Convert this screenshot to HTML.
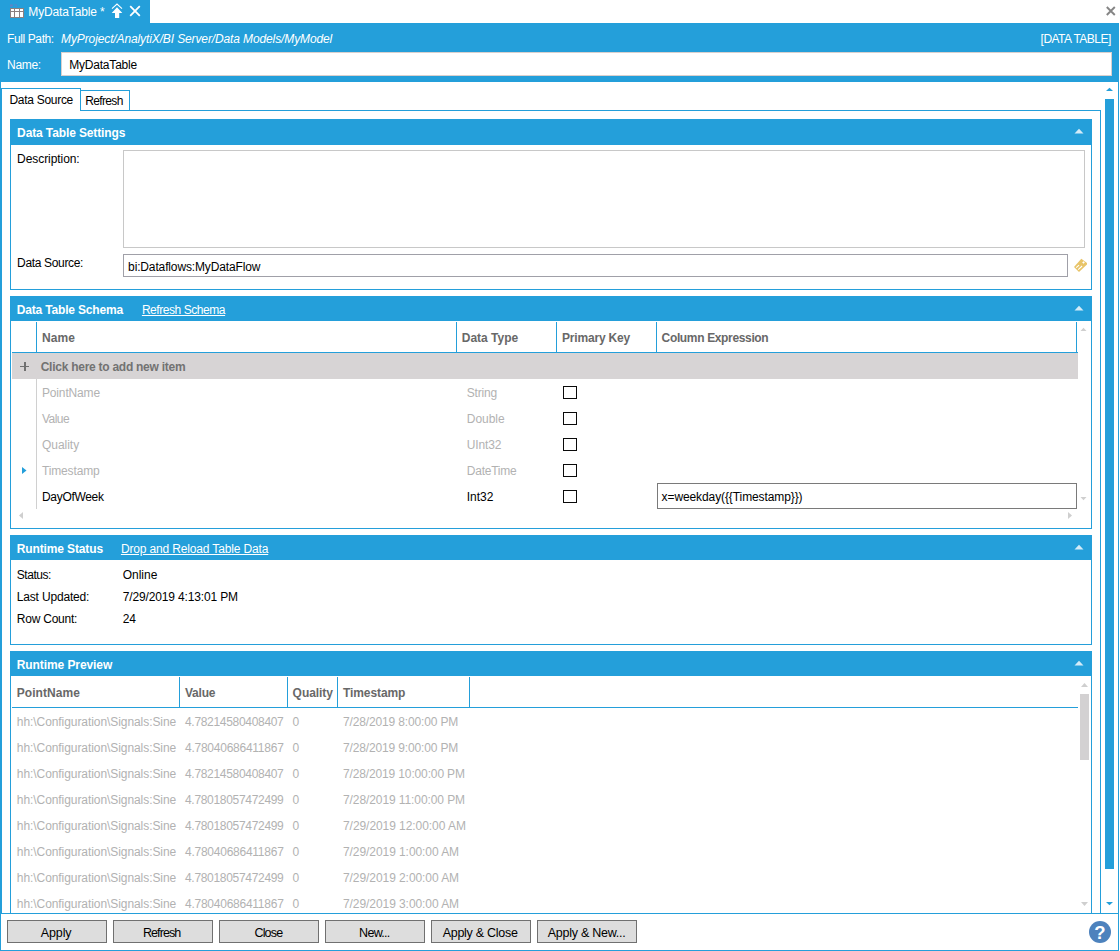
<!DOCTYPE html>
<html><head><meta charset="utf-8"><title>MyDataTable</title>
<style>
*{box-sizing:border-box;margin:0;padding:0}
html,body{width:1120px;height:951px;overflow:hidden;background:#fff}
body{position:relative;font-family:"Liberation Sans",sans-serif;font-size:12px;color:#000}
.a{position:absolute}
.t{position:absolute;white-space:nowrap;line-height:16px;height:16px}
.blue{background:#249fda}
.w{color:#fff}.b{font-weight:bold}.i{font-style:italic}.u{text-decoration:underline}
.g{color:#b2b2b2}
.hd{color:#686868;font-weight:bold}
.hd2{color:#727272;font-weight:bold}
.cb{position:absolute;width:14px;height:13px;border:1px solid #0a0a0a;background:#fff}
.btn{position:absolute;top:920px;width:100px;height:23px;border:1px solid #707070;background:#dddddd;font:inherit;color:inherit;padding:0;margin:0;border-radius:0;text-align:left;overflow:visible}
.tb{position:absolute;background:#fff;border:1px solid #ababab}
.vl{position:absolute;width:1px;background:#249fda}
.hl{position:absolute;height:1px;background:#249fda}
.pn{position:absolute;border:1px solid #249fda;background:#fff}
</style></head><body>
<div class="a blue" style="left:0;top:0;width:150px;height:23px"></div>
<div class="a blue" style="left:0;top:23px;width:1119px;height:59px"></div>
<div class="a blue" style="left:0;top:82px;width:1px;height:869px"></div>
<div class="a blue" style="left:1118px;top:82px;width:1px;height:869px"></div>
<div class="a blue" style="left:0;top:950px;width:1119px;height:1px"></div>
<div class="hl" style="left:1px;top:913px;width:1118px"></div>
<div class="a" style="left:61px;top:52px;width:1051px;height:24px;background:#fff;border:1px solid #d9d0ce"></div>
<div class="a" style="left:1px;top:110px;width:1100px;height:803px;border:1px solid #249fda;border-bottom:none"></div>
<div class="a" style="left:1px;top:88px;width:80px;height:23px;border:1px solid #249fda;border-bottom:none;background:#fff"></div>
<div class="a" style="left:80px;top:90px;width:50px;height:21px;border:1px solid #249fda;background:#fff"></div>
<div class="a blue" style="left:1105px;top:99px;width:9px;height:770px"></div>
<svg class="a" style="left:1105px;top:87px" width="9" height="5"><path d="M1 4L4.5 0.7L8 4Z" fill="#249fda"/></svg>
<svg class="a" style="left:1105px;top:901px" width="9" height="5"><path d="M1 1L4.5 4.3L8 1Z" fill="#249fda"/></svg>
<div class="pn" style="left:10px;top:119px;width:1082px;height:171px"></div>
<div class="a blue" style="left:10px;top:119px;width:1082px;height:26px"></div>
<svg class="a" style="left:1074px;top:128px" width="10" height="6"><path d="M0.5 5.5L5 0.8L9.5 5.5Z" fill="#d3ebf8"/></svg>
<div class="pn" style="left:10px;top:296px;width:1082px;height:233px"></div>
<div class="a blue" style="left:10px;top:296px;width:1082px;height:25px"></div>
<svg class="a" style="left:1074px;top:305px" width="10" height="6"><path d="M0.5 5.5L5 0.8L9.5 5.5Z" fill="#d3ebf8"/></svg>
<div class="pn" style="left:10px;top:535px;width:1082px;height:110px"></div>
<div class="a blue" style="left:10px;top:535px;width:1082px;height:25px"></div>
<svg class="a" style="left:1074px;top:544px" width="10" height="6"><path d="M0.5 5.5L5 0.8L9.5 5.5Z" fill="#d3ebf8"/></svg>
<div class="pn" style="left:10px;top:651px;width:1082px;height:263px"></div>
<div class="a blue" style="left:10px;top:651px;width:1082px;height:25px"></div>
<svg class="a" style="left:1074px;top:660px" width="10" height="6"><path d="M0.5 5.5L5 0.8L9.5 5.5Z" fill="#d3ebf8"/></svg>
<div class="tb" style="left:123px;top:150px;width:962px;height:98px;border-color:#c8c8c8"></div>
<div class="tb" style="left:123px;top:254px;width:945px;height:23px;border-color:#a0a0a8"></div>
<svg class="a" style="left:1073px;top:258px" width="15" height="15" viewBox="0 0 15 15"><path d="M8.3 0.8L14 5V6.6L6 14.1L1 9Z" fill="#e8c468"/><path d="M3.2 9.7L6.1 7.1M5.2 11.6L9.1 8" stroke="#fff" stroke-width="1.1" fill="none"/><rect x="9.6" y="3.5" width="1.9" height="1.9" fill="#fff" transform="rotate(40 10.5 4.4)"/></svg>
<div class="a" style="left:12px;top:353px;width:1066px;height:26px;background:#d7d4d5"></div>
<div class="hl" style="left:12px;top:352px;width:1066px"></div>
<div class="vl" style="left:36px;top:322px;height:30px"></div>
<div class="vl" style="left:456px;top:322px;height:30px"></div>
<div class="vl" style="left:556px;top:322px;height:30px"></div>
<div class="vl" style="left:656px;top:322px;height:30px"></div>
<div class="vl" style="left:1076px;top:322px;height:30px"></div>
<div class="vl" style="left:36px;top:379px;height:130px;background:#d0d0d0"></div>
<div class="a" style="left:20px;top:365.5px;width:9px;height:1.8px;background:#707070"></div>
<div class="a" style="left:23.5px;top:362px;width:2px;height:9px;background:#707070"></div>
<div class="cb" style="left:563px;top:386px"></div>
<div class="cb" style="left:563px;top:412px"></div>
<div class="cb" style="left:563px;top:438px"></div>
<div class="cb" style="left:563px;top:464px"></div>
<div class="cb" style="left:563px;top:490px"></div>
<svg class="a" style="left:22px;top:467px" width="5" height="7"><path d="M0 0L4.5 3.5L0 7Z" fill="#249fda"/></svg>
<div class="tb" style="left:657px;top:483px;width:420px;height:26px;border-color:#7a7a7a"></div>
<svg class="a" style="left:1080px;top:327px" width="7" height="4"><path d="M0.5 4L3.5 0.7L6.5 4Z" fill="#cfcfcf"/></svg>
<svg class="a" style="left:1080px;top:497px" width="7" height="4"><path d="M0.5 0L3.5 3.3L6.5 0Z" fill="#cfcfcf"/></svg>
<svg class="a" style="left:19px;top:512px" width="4" height="7"><path d="M4 0L0 3.5L4 7Z" fill="#cfcfcf"/></svg>
<svg class="a" style="left:1068px;top:512px" width="4" height="7"><path d="M0 0L4 3.5L0 7Z" fill="#cfcfcf"/></svg>
<div class="hl" style="left:12px;top:707px;width:1066px"></div>
<div class="vl" style="left:179px;top:677px;height:31px"></div>
<div class="vl" style="left:287px;top:677px;height:31px"></div>
<div class="vl" style="left:337px;top:677px;height:31px"></div>
<div class="vl" style="left:469px;top:677px;height:31px"></div>
<div class="a" style="left:1080px;top:694px;width:9px;height:66px;background:#d3d1d2"></div>
<svg class="a" style="left:1081px;top:683px" width="7" height="4"><path d="M0 4L3.5 0L7 4Z" fill="#cfcfcf"/></svg>
<svg class="a" style="left:1081px;top:902px" width="7" height="4"><path d="M0 0L3.5 4L7 0Z" fill="#cfcfcf"/></svg>
<svg class="a" style="left:1089px;top:921px" width="22" height="22" viewBox="0 0 22 22"><circle cx="11" cy="11" r="11" fill="#4d82bd"/><text x="11" y="18.2" text-anchor="middle" font-family="Liberation Sans, sans-serif" font-weight="bold" font-size="18.5" fill="#fff">?</text></svg>
<svg class="a" style="left:1105px;top:5px" width="11" height="11" viewBox="0 0 11 11"><path d="M1.8 2L9.8 10M9.8 2L1.8 10" stroke="#858585" stroke-width="1.9" fill="none"/></svg>
<svg class="a" style="left:10px;top:4px" width="14" height="14" viewBox="0 0 14 14"><rect x="0" y="4" width="14" height="10" fill="#8b8080"/><rect x="0" y="0.4" width="2.8" height="2.2" fill="#5b86c8"/><path d="M4.2 0.9H6.6V2.8" stroke="#5b86c8" stroke-width="0.9" fill="none"/><g fill="#fff"><rect x="1" y="5" width="3" height="2"/><rect x="5" y="5" width="4" height="2"/><rect x="10" y="5" width="3" height="2"/><rect x="1" y="8" width="3" height="5"/><rect x="5" y="8" width="4" height="5"/><rect x="10" y="8" width="3" height="5"/></g></svg>
<svg class="a" style="left:111px;top:3px" width="12" height="15" viewBox="0 0 12 15"><path d="M1 5.6L6 1L11 5.6" stroke="#fff" stroke-width="1.1" fill="none"/><path d="M6 4.2L11.3 9.9H8.2V14.9H4V9.9H0.7Z" fill="#fff"/></svg>
<svg class="a" style="left:129px;top:5px" width="12" height="12" viewBox="0 0 12 12"><path d="M1.2 1.2L10.8 10.8M10.8 1.2L1.2 10.8" stroke="#fff" stroke-width="1.8" fill="none"/></svg>
<div class="t w" style="left:28.3px;top:3.6px;font-size:12px;letter-spacing:-0.14px;">MyDataTable *</div>
<div class="t w" style="left:7.1px;top:30.8px;font-size:12px;letter-spacing:-0.40px;">Full Path:</div>
<div class="t w i" style="left:61.1px;top:30.8px;font-size:12px;letter-spacing:-0.12px;">MyProject/AnalytiX/BI Server/Data Models/MyModel</div>
<div class="t w" style="left:1040.6px;top:31.3px;font-size:12px;letter-spacing:-0.53px;">[DATA TABLE]</div>
<div class="t w" style="left:7.1px;top:56.5px;font-size:12px;letter-spacing:-0.31px;">Name:</div>
<div class="t " style="left:69.2px;top:56.5px;font-size:12px;letter-spacing:-0.20px;">MyDataTable</div>
<div class="t " style="left:9.4px;top:91.8px;font-size:12px;letter-spacing:-0.28px;">Data Source</div>
<div class="t " style="left:85.3px;top:92.8px;font-size:12px;letter-spacing:-0.66px;">Refresh</div>
<div class="t w b" style="left:17.1px;top:124.8px;font-size:12px;letter-spacing:-0.12px;">Data Table Settings</div>
<div class="t " style="left:17.1px;top:150.8px;font-size:12px;letter-spacing:-0.07px;">Description:</div>
<div class="t " style="left:17.1px;top:255.3px;font-size:12px;letter-spacing:-0.34px;">Data Source:</div>
<div class="t " style="left:128.1px;top:258.8px;font-size:12px;letter-spacing:-0.14px;">bi:Dataflows:MyDataFlow</div>
<div class="t w b" style="left:16.8px;top:302.3px;font-size:12px;letter-spacing:-0.18px;">Data Table Schema</div>
<div class="t w u" style="left:141.9px;top:302.3px;font-size:12px;letter-spacing:-0.44px;">Refresh Schema</div>
<div class="t hd" style="left:42.0px;top:329.5px;font-size:12px;letter-spacing:0.07px;">Name</div>
<div class="t hd" style="left:461.8px;top:329.5px;font-size:12px;letter-spacing:-0.01px;">Data Type</div>
<div class="t hd" style="left:562.0px;top:329.5px;font-size:12px;letter-spacing:-0.18px;">Primary Key</div>
<div class="t hd" style="left:661.6px;top:329.5px;font-size:12px;letter-spacing:-0.35px;">Column Expression</div>
<div class="t hd2" style="left:40.7px;top:358.5px;font-size:12px;letter-spacing:-0.26px;">Click here to add new item</div>
<div class="t g" style="left:42.0px;top:384.8px;font-size:12px;letter-spacing:-0.16px;">PointName</div>
<div class="t g" style="left:466.8px;top:384.8px;font-size:12px;letter-spacing:-0.19px;">String</div>
<div class="t g" style="left:42.0px;top:410.8px;font-size:12px;letter-spacing:-0.53px;">Value</div>
<div class="t g" style="left:466.8px;top:410.8px;font-size:12px;letter-spacing:-0.03px;">Double</div>
<div class="t g" style="left:42.0px;top:436.8px;font-size:12px;letter-spacing:-0.03px;">Quality</div>
<div class="t g" style="left:466.8px;top:436.8px;font-size:12px;letter-spacing:-0.13px;">UInt32</div>
<div class="t g" style="left:42.0px;top:462.8px;font-size:12px;letter-spacing:-0.15px;">Timestamp</div>
<div class="t g" style="left:466.8px;top:462.8px;font-size:12px;letter-spacing:-0.24px;">DateTime</div>
<div class="t " style="left:42.0px;top:488.8px;font-size:12px;letter-spacing:-0.32px;">DayOfWeek</div>
<div class="t " style="left:466.8px;top:488.8px;font-size:12px;letter-spacing:-0.03px;">Int32</div>
<div class="t " style="left:661.6px;top:488.8px;font-size:12px;letter-spacing:-0.10px;">x=weekday({{Timestamp}})</div>
<div class="t w b" style="left:16.8px;top:540.5px;font-size:12px;letter-spacing:-0.13px;">Runtime Status</div>
<div class="t w u" style="left:120.9px;top:540.5px;font-size:12px;letter-spacing:-0.15px;">Drop and Reload Table Data</div>
<div class="t " style="left:16.8px;top:566.8px;font-size:12px;letter-spacing:-0.46px;">Status:</div>
<div class="t " style="left:122.7px;top:566.8px;font-size:12px;">Online</div>
<div class="t " style="left:16.8px;top:588.5px;font-size:12px;letter-spacing:-0.18px;">Last Updated:</div>
<div class="t " style="left:122.7px;top:588.5px;font-size:12px;letter-spacing:-0.14px;">7/29/2019 4:13:01 PM</div>
<div class="t " style="left:16.8px;top:611.0px;font-size:12px;letter-spacing:-0.23px;">Row Count:</div>
<div class="t " style="left:122.7px;top:611.0px;font-size:12px;letter-spacing:-0.16px;">24</div>
<div class="t w b" style="left:16.8px;top:656.6px;font-size:12px;letter-spacing:-0.09px;">Runtime Preview</div>
<div class="t hd" style="left:16.8px;top:684.8px;font-size:12px;letter-spacing:0.05px;">PointName</div>
<div class="t hd" style="left:185.0px;top:684.8px;font-size:12px;letter-spacing:-0.24px;">Value</div>
<div class="t hd" style="left:292.6px;top:684.8px;font-size:12px;letter-spacing:-0.05px;">Quality</div>
<div class="t hd" style="left:343.0px;top:684.8px;font-size:12px;letter-spacing:-0.09px;">Timestamp</div>
<div class="a" style="left:0;top:708px;width:1078px;height:205px;overflow:hidden">
<div class="t g" style="left:16.8px;top:6.0px;font-size:12px;letter-spacing:-0.07px;">hh:\Configuration\Signals:Sine</div>
<div class="t g" style="left:185.0px;top:6.0px;font-size:12px;letter-spacing:-0.31px;">4.78214580408407</div>
<div class="t g" style="left:292.6px;top:6.0px;font-size:12px;">0</div>
<div class="t g" style="left:343.0px;top:6.0px;font-size:12px;letter-spacing:-0.15px;">7/28/2019 8:00:00 PM</div>
<div class="t g" style="left:16.8px;top:32.0px;font-size:12px;letter-spacing:-0.07px;">hh:\Configuration\Signals:Sine</div>
<div class="t g" style="left:185.0px;top:32.0px;font-size:12px;letter-spacing:-0.25px;">4.78040686411867</div>
<div class="t g" style="left:292.6px;top:32.0px;font-size:12px;">0</div>
<div class="t g" style="left:343.0px;top:32.0px;font-size:12px;letter-spacing:-0.15px;">7/28/2019 9:00:00 PM</div>
<div class="t g" style="left:16.8px;top:58.0px;font-size:12px;letter-spacing:-0.07px;">hh:\Configuration\Signals:Sine</div>
<div class="t g" style="left:185.0px;top:58.0px;font-size:12px;letter-spacing:-0.31px;">4.78214580408407</div>
<div class="t g" style="left:292.6px;top:58.0px;font-size:12px;">0</div>
<div class="t g" style="left:343.0px;top:58.0px;font-size:12px;letter-spacing:-0.14px;">7/28/2019 10:00:00 PM</div>
<div class="t g" style="left:16.8px;top:84.0px;font-size:12px;letter-spacing:-0.07px;">hh:\Configuration\Signals:Sine</div>
<div class="t g" style="left:185.0px;top:84.0px;font-size:12px;letter-spacing:-0.31px;">4.78018057472499</div>
<div class="t g" style="left:292.6px;top:84.0px;font-size:12px;">0</div>
<div class="t g" style="left:343.0px;top:84.0px;font-size:12px;letter-spacing:-0.09px;">7/28/2019 11:00:00 PM</div>
<div class="t g" style="left:16.8px;top:110.0px;font-size:12px;letter-spacing:-0.07px;">hh:\Configuration\Signals:Sine</div>
<div class="t g" style="left:185.0px;top:110.0px;font-size:12px;letter-spacing:-0.31px;">4.78018057472499</div>
<div class="t g" style="left:292.6px;top:110.0px;font-size:12px;">0</div>
<div class="t g" style="left:343.0px;top:110.0px;font-size:12px;letter-spacing:-0.06px;">7/29/2019 12:00:00 AM</div>
<div class="t g" style="left:16.8px;top:136.0px;font-size:12px;letter-spacing:-0.07px;">hh:\Configuration\Signals:Sine</div>
<div class="t g" style="left:185.0px;top:136.0px;font-size:12px;letter-spacing:-0.25px;">4.78040686411867</div>
<div class="t g" style="left:292.6px;top:136.0px;font-size:12px;">0</div>
<div class="t g" style="left:343.0px;top:136.0px;font-size:12px;letter-spacing:-0.07px;">7/29/2019 1:00:00 AM</div>
<div class="t g" style="left:16.8px;top:162.0px;font-size:12px;letter-spacing:-0.07px;">hh:\Configuration\Signals:Sine</div>
<div class="t g" style="left:185.0px;top:162.0px;font-size:12px;letter-spacing:-0.31px;">4.78018057472499</div>
<div class="t g" style="left:292.6px;top:162.0px;font-size:12px;">0</div>
<div class="t g" style="left:343.0px;top:162.0px;font-size:12px;letter-spacing:-0.07px;">7/29/2019 2:00:00 AM</div>
<div class="t g" style="left:16.8px;top:188.0px;font-size:12px;letter-spacing:-0.07px;">hh:\Configuration\Signals:Sine</div>
<div class="t g" style="left:185.0px;top:188.0px;font-size:12px;letter-spacing:-0.25px;">4.78040686411867</div>
<div class="t g" style="left:292.6px;top:188.0px;font-size:12px;">0</div>
<div class="t g" style="left:343.0px;top:188.0px;font-size:12px;letter-spacing:-0.07px;">7/29/2019 3:00:00 AM</div>
</div>
<button type="button" class="btn" style="left:7px"><span class="t" style="left:32.7px;top:3.9px;font-size:12.5px;letter-spacing:-0.10px;">Apply</span></button>
<button type="button" class="btn" style="left:113px"><span class="t" style="left:28.9px;top:3.9px;font-size:12.5px;letter-spacing:-0.90px;">Refresh</span></button>
<button type="button" class="btn" style="left:219px"><span class="t" style="left:34.4px;top:3.9px;font-size:12.5px;letter-spacing:-0.79px;">Close</span></button>
<button type="button" class="btn" style="left:325px"><span class="t" style="left:33.1px;top:3.9px;font-size:12.5px;letter-spacing:-0.71px;">New...</span></button>
<button type="button" class="btn" style="left:431px"><span class="t" style="left:10.7px;top:3.9px;font-size:12.5px;letter-spacing:-0.28px;">Apply &amp; Close</span></button>
<button type="button" class="btn" style="left:537px"><span class="t" style="left:9.7px;top:3.9px;font-size:12.5px;letter-spacing:-0.25px;">Apply &amp; New...</span></button>
</body></html>
